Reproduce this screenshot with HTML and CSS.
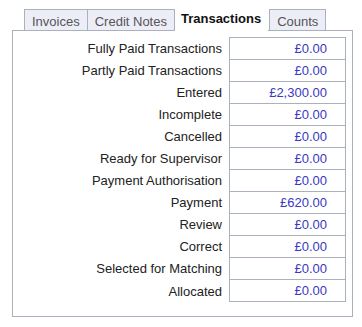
FILE: index.html
```html
<!DOCTYPE html>
<html>
<head>
<meta charset="utf-8">
<link rel="stylesheet" href="styles.css">
</head>
<body>
<div class="wrap">
  <div class="tabs">
    <div class="tab">Invoices</div>
    <div class="tab">Credit Notes</div>
    <div class="tab active">Transactions</div>
    <div class="tab">Counts</div>
  </div>
  <div class="panel">
    <table class="counts">
      <tr><td class="lbl">Fully Paid Transactions</td><td class="val">£0.00</td></tr>
      <tr><td class="lbl">Partly Paid Transactions</td><td class="val">£0.00</td></tr>
      <tr><td class="lbl">Entered</td><td class="val">£2,300.00</td></tr>
      <tr><td class="lbl">Incomplete</td><td class="val">£0.00</td></tr>
      <tr><td class="lbl">Cancelled</td><td class="val">£0.00</td></tr>
      <tr><td class="lbl">Ready for Supervisor</td><td class="val">£0.00</td></tr>
      <tr><td class="lbl">Payment Authorisation</td><td class="val">£0.00</td></tr>
      <tr><td class="lbl">Payment</td><td class="val">£620.00</td></tr>
      <tr><td class="lbl">Review</td><td class="val">£0.00</td></tr>
      <tr><td class="lbl">Correct</td><td class="val">£0.00</td></tr>
      <tr><td class="lbl">Selected for Matching</td><td class="val">£0.00</td></tr>
      <tr class="last"><td class="lbl">Allocated</td><td class="val">£0.00</td></tr>
    </table>
  </div>
</div>
</body>
</html>
```

FILE: styles.css
```css
html, body {
  margin: 0;
  padding: 0;
  background: #ffffff;
}
body {
  font-family: "Liberation Sans", Arial, sans-serif;
  font-size: 13px;
  line-height: 15px;
  color: #222222;
}
.wrap {
  padding: 9px 0 0 12px;
  width: 341px;
}
.tabs {
  display: flex;
  align-items: flex-end;
  margin-left: 12px;
}
.tab {
  background: #ededf7;
  color: #555555;
  border: 1px solid #a9b2bc;
  border-bottom: none;
  padding: 4px 7px 1px 7px;
  white-space: nowrap;
}
.tab + .tab {
  margin-left: -1px;
}
.tab.active {
  background: #ffffff;
  color: #111111;
  font-weight: bold;
  border-color: transparent;
  background-clip: padding-box;
  padding: 1px 7px 5px 6px;
  margin-bottom: -1px;
  position: relative;
  z-index: 1;
}
.tab.active + .tab {
  margin-left: 0;
}
.panel {
  border: 1px solid #a9b2bc;
  padding: 6px 6px 14px 0;
  box-sizing: border-box;
  width: 341px;
  height: 287px;
}
.counts {
  border-collapse: separate;
  border-spacing: 0;
  margin-left: auto;
}
.counts td {
  padding: 3px 0;
  vertical-align: middle;
  white-space: nowrap;
}
.counts .lbl {
  text-align: right;
  padding-right: 7px;
  padding-top: 4px;
}
.counts .val {
  width: 97px;
  text-align: right;
  padding-right: 18px;
  color: #3838c4;
  border: 1px solid #a9b2bc;
  border-bottom: none;
}
.counts .last .val {
  border-bottom: 1px solid #a9b2bc;
}
```
